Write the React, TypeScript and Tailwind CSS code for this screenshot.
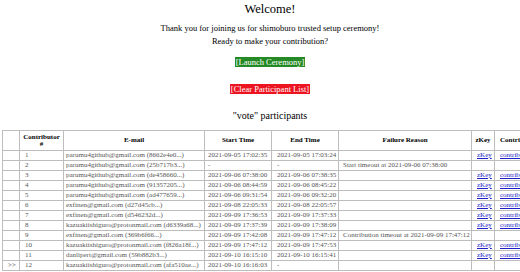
const rows = [
  { n: "1", email: "parumu4github@gmail.com (8662e4e0...)", start: "2021-09-05 17:02:35", end: "2021-09-05 17:03:24", fail: "", links: true },
  { n: "2", email: "parumu4github@gmail.com (25b717b3...)", start: "-", end: "-", fail: "Start timeout at 2021-09-06 07:38:00", links: false },
  { n: "3", email: "parumu4github@gmail.com (de458660...)", start: "2021-09-06 07:38:00", end: "2021-09-06 07:38:35", fail: "", links: true },
  { n: "4", email: "parumu4github@gmail.com (91357205...)", start: "2021-09-06 08:44:59", end: "2021-09-06 08:45:22", fail: "", links: true },
  { n: "5", email: "parumu4github@gmail.com (ad477659...)", start: "2021-09-06 09:31:54", end: "2021-09-06 09:32:20", fail: "", links: true },
  { n: "6", email: "exfinen@gmail.com (d27d45cb...)", start: "2021-09-08 22:05:33", end: "2021-09-08 22:05:57", fail: "", links: true },
  { n: "7", email: "exfinen@gmail.com (d546232d...)", start: "2021-09-09 17:36:53", end: "2021-09-09 17:37:33", fail: "", links: true },
  { n: "8", email: "kazuakiishiguro@protonmail.com (d6339a68...)", start: "2021-09-09 17:37:39", end: "2021-09-09 17:38:09", fail: "", links: true },
  { n: "9", email: "exfinen@gmail.com (369b6f66...)", start: "2021-09-09 17:42:08", end: "2021-09-09 17:47:12", fail: "Contribution timeout at 2021-09-09 17:47:12", links: false },
  { n: "10", email: "kazuakiishiguro@protonmail.com (f826a18f...)", start: "2021-09-09 17:47:12", end: "2021-09-09 17:47:53", fail: "", links: true },
  { n: "11", email: "danlipert@gmail.com (59b882b3...)", start: "2021-09-10 16:15:10", end: "2021-09-10 16:15:41", fail: "", links: true },
  { n: "12", email: "kazuakiishiguro@protonmail.com (afa510ae...)", start: "2021-09-10 16:16:03", end: "-", fail: "", links: false, current: true },
];

const td = "border border-[#bdbdbd] h-[10px] p-0 whitespace-nowrap overflow-hidden text-left align-middle";
const th = "border border-[#bdbdbd] p-0 font-bold text-black text-center align-middle";

export default function App() {
  return (
    <div className="w-[520px] h-[272px] overflow-hidden bg-white font-[family-name:'Liberation_Serif',serif] text-black">
      <div className="w-[540px] text-center">
        <div className="pt-[1px] text-[12.5px] leading-[16px]">Welcome!</div>
        <p className="mt-[5px] text-[8.5px] leading-[13px]">
          Thank you for joining us for shimoburo trusted setup ceremony!
          <br />
          Ready to make your contribution?
        </p>
        <div className="mt-[9px] flex justify-center">
          <button className="bg-[#258a25] text-white text-[8.5px] leading-[10px] px-[1px]">[Launch Ceremony]</button>
        </div>
        <div className="mt-[17px] flex justify-center">
          <button className="bg-[#ec1421] text-white text-[8.5px] leading-[10px] px-[1px]">[Clear Participant List]</button>
        </div>
        <div className="mt-[16px] text-[10px] leading-[12px]">"vote" participants</div>
      </div>

      <table className="mt-[8px] ml-[2px] w-[558px] table-fixed border-collapse border border-[#999] text-[7px] leading-[7px] text-[#555]">
        <thead>
          <tr className="h-[20px]">
            <th className={`${th} w-[17px]`}></th>
            <th className={`${th} w-[44px]`}>
              <div className="leading-[7px]">Contributor</div>
              <div className="leading-[7px]">#</div>
            </th>
            <th className={`${th} w-[141px]`}>E-mail</th>
            <th className={`${th} w-[67px]`}>Start Time</th>
            <th className={`${th} w-[67px]`}>End Time</th>
            <th className={`${th} w-[133px]`}>Failure Reason</th>
            <th className={`${th} w-[23px]`}>zKey</th>
            <th className={`${th} w-[66px] text-left pl-[5px]`}>Contributions</th>
          </tr>
        </thead>
        <tbody>
          {rows.map((r) => (
            <tr key={r.n}>
              <td className={`${td} pl-[5px]`}>{r.current ? ">>" : ""}</td>
              <td className={`${td} pl-[5px]`}>{r.n}</td>
              <td className={`${td} pl-[2px]`}>{r.email}</td>
              <td className={`${td} pl-[3px]`}>{r.start}</td>
              <td className={`${td} pl-[5px]`}>{r.end}</td>
              <td className={`${td} pl-[4px]`}>{r.fail}</td>
              <td className={`${td} pl-[5px]`}>
                {r.links && <a className="text-[#2020c8] underline">zKey</a>}
              </td>
              <td className={`${td} pl-[5px]`}>
                {r.links && <a className="text-[#2020c8] underline">contribution</a>}
              </td>
            </tr>
          ))}
        </tbody>
      </table>
    </div>
  );
}
